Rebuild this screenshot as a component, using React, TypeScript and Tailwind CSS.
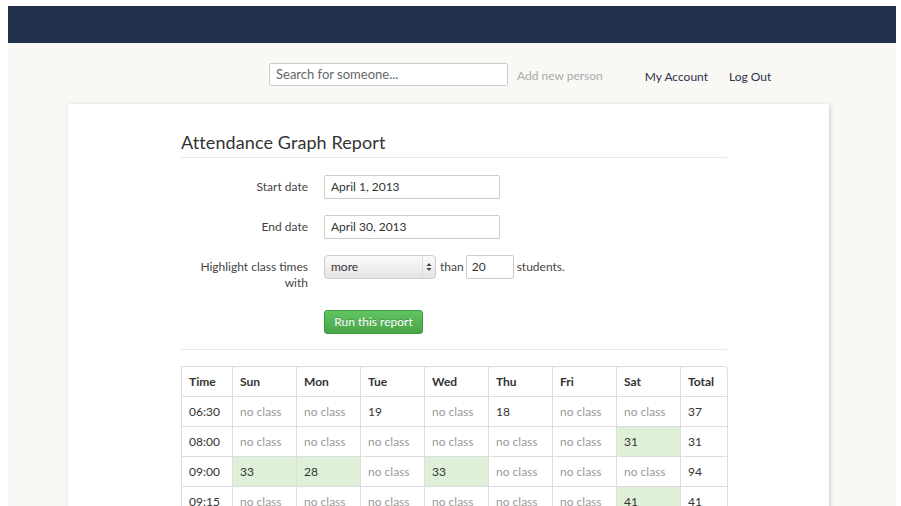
const days = ['Sun', 'Mon', 'Tue', 'Wed', 'Thu', 'Fri', 'Sat']

type Cell = number | null

const rows: { time: string; cells: Cell[]; total: number }[] = [
  { time: '06:30', cells: [null, null, 19, null, 18, null, null], total: 37 },
  { time: '08:00', cells: [null, null, null, null, null, null, 31], total: 31 },
  { time: '09:00', cells: [33, 28, null, 33, null, null, null], total: 94 },
  { time: '09:15', cells: [null, null, null, null, null, null, 41], total: 41 },
]

const colWidths = ['w-[51px]', 'w-[64px]', 'w-[64px]', 'w-[64px]', 'w-[64px]', 'w-[64px]', 'w-[64px]', 'w-[64px]', 'w-[47px]']

const FormRow = ({ label, children }: { label: React.ReactNode; children: React.ReactNode }) => (
  <div className="flex items-start gap-4">
    <div className="w-[127px] shrink-0 pt-[4px] text-right text-[12px] leading-[16px] text-[#444]">{label}</div>
    <div className="flex items-center">{children}</div>
  </div>
)

const App = () => {
  return (
    <div className="min-h-screen bg-white pt-[6px] pl-[8px] pr-[5px]" style={{ fontFamily: 'Lato, "Open Sans", sans-serif' }}>
      <div className="h-[500px] overflow-hidden bg-[#f9f8f5]">
        <div className="h-[37px] bg-[#23304b]" />

        <div className="flex h-[61px] items-start pt-[20px] pl-[261px] text-[12px]">
          <div className="flex h-[23px] w-[239px] items-center rounded-[2px] border border-[#ccc] bg-white pl-[6px] text-[13px] text-[#666]">
            Search for someone...
          </div>
          <span className="ml-[9px] mt-[4px] text-[#aaa]">Add new person</span>
          <span className="ml-[42px] mt-[5px] text-[#2a3348]">My Account</span>
          <span className="ml-[21px] mt-[5px] text-[#2a3348]">Log Out</span>
        </div>

        <div className="ml-[60px] w-[761px] bg-white pl-[113px] pt-[26px] pb-10 shadow-[1px_1px_4px_rgba(0,0,0,0.18)]">
          <div className="w-[546px]">
            <h1 className="text-[18px] leading-[24px] tracking-[0.1px] text-[#333]">Attendance Graph Report</h1>
            <div className="mt-[3px] border-t border-[#e8e8e8]" />

            <div className="mt-[17px] flex flex-col gap-[16px]">
              <FormRow label="Start date">
                <div className="flex h-[24px] w-[176px] items-center rounded-[2px] border border-[#ccc] bg-white pl-[6px] text-[12px] text-[#333]">April 1, 2013</div>
              </FormRow>
              <FormRow label="End date">
                <div className="flex h-[24px] w-[176px] items-center rounded-[2px] border border-[#ccc] bg-white pl-[6px] text-[12px] text-[#333]">April 30, 2013</div>
              </FormRow>
              <FormRow label={<>Highlight class times<br />with</>}>
                <div className="flex h-[24px] w-[112px] items-center rounded-[4px] border border-[#ccc] bg-gradient-to-b from-[#fafafa] to-[#e4e4e4] text-[12px] text-[#333]">
                  <span className="flex-1 pl-[6px]">more</span>
                  <div className="flex h-full w-[13px] items-center justify-center border-l border-[#ddd]">
                    <svg width="6" height="10" viewBox="0 0 6 10">
                      <path d="M3 1 L5.5 4 L0.5 4 Z M3 9 L5.5 6 L0.5 6 Z" fill="#444" />
                    </svg>
                  </div>
                </div>
                <span className="ml-[4px] text-[12px] text-[#444]">than</span>
                <div className="ml-[2px] flex h-[24px] w-[48px] items-center rounded-[2px] border border-[#ccc] bg-white pl-[5px] text-[12px] text-[#333]">20</div>
                <span className="ml-[3px] text-[12px] text-[#444]">students.</span>
              </FormRow>
            </div>

            <div className="ml-[143px] mt-[17px]">
              <button className="h-[24px] w-[99px] rounded-[3px] border border-[#3f9a3f] bg-gradient-to-b from-[#62c462] to-[#48a548] text-[12px] text-white [text-shadow:0_-1px_0_rgba(0,0,0,0.2)]">
                Run this report
              </button>
            </div>

            <div className="mt-[15px] border-t border-[#e8e8e8]" />

            <table className="mt-[16px] w-[547px] border-separate border-spacing-0 rounded-tr-[4px] border-t border-l border-[#ddd] text-[12px]">
              <thead>
                <tr>
                  {['Time', ...days, 'Total'].map((h, i) => (
                    <th key={h} className={`${colWidths[i]} h-[30px] border-r border-b border-[#ddd] pl-[7px] text-left font-bold text-[#333] ${i === 8 ? 'rounded-tr-[4px]' : ''}`}>
                      {h}
                    </th>
                  ))}
                </tr>
              </thead>
              <tbody>
                {rows.map(r => (
                  <tr key={r.time}>
                    <td className="h-[30px] border-r border-b border-[#ddd] pl-[7px] text-[#333]">{r.time}</td>
                    {r.cells.map((c, i) => (
                      <td key={i} className={`h-[30px] border-r border-b border-[#ddd] pl-[7px] ${c === null ? 'text-[#999]' : c >= 20 ? 'bg-[#dff0d8] text-[#333]' : 'text-[#333]'}`}>
                        {c === null ? 'no class' : c}
                      </td>
                    ))}
                    <td className="h-[30px] border-r border-b border-[#ddd] pl-[7px] text-[#333]">{r.total}</td>
                  </tr>
                ))}
              </tbody>
            </table>
          </div>
        </div>
      </div>
    </div>
  )
}

export default App
